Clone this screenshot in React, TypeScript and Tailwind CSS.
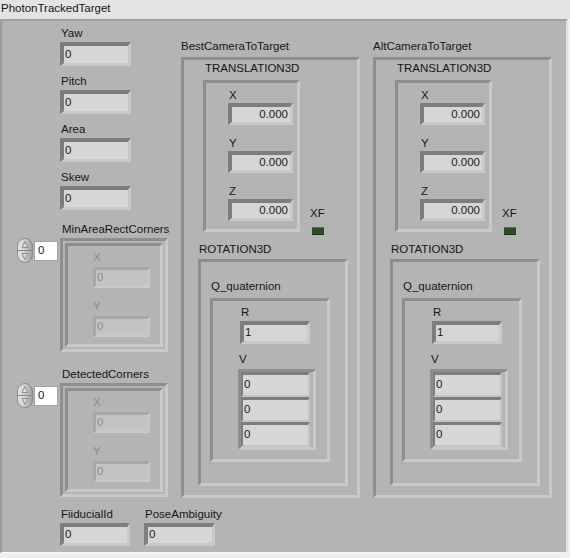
const FRAME =
  "border-[3px] border-t-[#8e8e8e] border-l-[#8e8e8e] border-b-[#c9c9c9] border-r-[#c9c9c9]";

function Lbl({ t, cls = "", dim = false }: { t: string; cls?: string; dim?: boolean }) {
  return (
    <div
      className={`h-[15px] leading-[15px] whitespace-nowrap ${dim ? "text-[#8d8d8d]" : "text-[#161616]"} ${cls}`}
    >
      {t}
    </div>
  );
}

function Num({ v, cls, right = false }: { v: string; cls: string; right?: boolean }) {
  return (
    <div
      className={`flex items-center border-t-4 border-l-4 border-b-[3px] border-r-[3px] border-t-[#7d7d7d] border-l-[#7d7d7d] border-b-[#c9c9c9] border-r-[#c9c9c9] bg-[#d6d6d6] text-[#1a1a1a] leading-none ${
        right ? "justify-end pr-[2px]" : "pl-[1px]"
      } ${cls}`}
    >
      {v}
    </div>
  );
}

function DimNum({ cls }: { cls: string }) {
  return (
    <div
      className={`flex items-center pl-[1px] border-t-[3px] border-l-[3px] border-b-2 border-r-2 border-t-[#a7a7a7] border-l-[#a7a7a7] border-b-[#c9c9c9] border-r-[#c9c9c9] bg-[#c3c3c3] text-[#8d8d8d] leading-none ${cls}`}
    >
      0
    </div>
  );
}

function Spinner({ id }: { id: string }) {
  return (
    <svg width="16" height="25" viewBox="0 0 16 25">
      <defs>
        <linearGradient id={id} x1="0" y1="0" x2="1" y2="0">
          <stop offset="0" stopColor="#e6e6e6" />
          <stop offset="0.5" stopColor="#cfcfcf" />
          <stop offset="1" stopColor="#9c9c9c" />
        </linearGradient>
      </defs>
      <rect x="0.5" y="0.5" width="15" height="24" rx="7.5" fill={`url(#${id})`} stroke="#8c8c8c" />
      <line x1="1" y1="12.5" x2="15" y2="12.5" stroke="#8c8c8c" />
      <path d="M8 3.5 L11 9.5 L5 9.5 Z" fill="#d8d8d8" stroke="#808080" strokeWidth="0.8" />
      <path d="M8 21.5 L11 15.5 L5 15.5 Z" fill="#d8d8d8" stroke="#808080" strokeWidth="0.8" />
    </svg>
  );
}

function ArrayCtl({ name, id }: { name: string; id: string }) {
  return (
    <>
      <Lbl t={name} cls="ml-[45px]" />
      <div className="flex items-start mt-[1px]">
        <div className="flex items-center w-[43px] h-[25px]">
          <Spinner id={id} />
          <div className="ml-[1px] w-[24px] h-[20px] border border-[#a2a2a2] bg-white flex items-center pl-[3px] text-[#1a1a1a] leading-none">
            0
          </div>
        </div>
        <div className={`${FRAME} w-[108px] h-[114px]`}>
          <div className={`${FRAME} ml-[2px] mt-[2px] w-[98px] h-[104px] flex flex-col`}>
            <Lbl t="X" dim cls="ml-[25px] mt-[4px]" />
            <DimNum cls="ml-[25px] mt-[2px] w-[57px] h-[21px]" />
            <Lbl t="Y" dim cls="ml-[25px] mt-[11px]" />
            <DimNum cls="ml-[25px] mt-[2px] w-[57px] h-[21px]" />
          </div>
        </div>
      </div>
    </>
  );
}

function Camera({ name, cls }: { name: string; cls: string }) {
  return (
    <div className={`flex flex-col mt-[18px] ${cls}`}>
      <Lbl t={name} />
      <div className={`${FRAME} mt-[3px] w-[179px] h-[441px] flex flex-col`}>
        <Lbl t="TRANSLATION3D" cls="ml-[21px] mt-[1px]" />
        <div className="flex items-start mt-[4px]">
          <div className={`${FRAME} ml-[19px] w-[97px] h-[152px] flex flex-col pl-[22px] pt-[5px]`}>
            {["X", "Y", "Z"].map((a, i) => (
              <div key={a} className={i > 0 ? "mt-[11px]" : ""}>
                <Lbl t={a} cls="ml-[1px]" />
                <Num v="0.000" right cls="w-[65px] h-[22px]" />
              </div>
            ))}
          </div>
          <div className="ml-[10px] mt-[126px] flex flex-col">
            <Lbl t="XF" />
            <div className="ml-[2px] mt-[6px] w-[12px] h-[8px] bg-[#2e4b24] border-t border-t-[#51703f] border-b border-b-[#1f3318]" />
          </div>
        </div>
        <Lbl t="ROTATION3D" cls="ml-[15px] mt-[7px]" />
        <div className={`${FRAME} ml-[14px] mt-[2px] w-[150px] h-[227px] flex flex-col`}>
          <Lbl t="Q_quaternion" cls="ml-[10px] mt-[17px]" />
          <div className={`${FRAME} ml-[9px] mt-[4px] w-[120px] h-[164px] flex flex-col`}>
            <Lbl t="R" cls="ml-[28px] mt-[4px]" />
            <Num v="1" cls="ml-[27px] mt-[1px] w-[70px] h-[23px]" />
            <Lbl t="V" cls="ml-[26px] mt-[8px]" />
            <div className={`${FRAME} ml-[25px] mt-[2px] w-[78px] h-[81px] flex flex-col`}>
              {[0, 1, 2].map((k) => (
                <div
                  key={k}
                  className="flex items-center pl-[1px] w-[69px] h-[25px] border-t-[3px] border-l-2 border-b-2 border-r-2 border-t-[#7d7d7d] border-l-[#7d7d7d] border-b-[#c4c4c4] border-r-[#c4c4c4] bg-[#d6d6d6] text-[#1a1a1a] leading-none"
                >
                  0
                </div>
              ))}
            </div>
          </div>
        </div>
      </div>
    </div>
  );
}

export default function App() {
  return (
    <div className="w-[570px] h-[558px] bg-[#efefef] font-['Liberation_Sans',Arial,sans-serif] text-[11.5px] overflow-hidden">
      <div className="h-[19px] bg-[#e4e4e4] pl-[1px] pt-[1px]">
        <Lbl t="PhotonTrackedTarget" />
      </div>
      <div className="w-[568px] h-[534px] bg-[#b4b4b4] border-t-2 border-l-2 border-r-2 border-b border-t-[#a0a0a0] border-l-[#9c9c9c] border-r-[#e2e2e2] border-b-[#f6f6f6] flex flex-col">
        <div className="flex items-start">
          <div className="ml-[15px] w-[151px] flex flex-col">
            {["Yaw", "Pitch", "Area", "Skew"].map((n, i) => (
              <div key={n} className={i === 0 ? "mt-[5px]" : "mt-[8px]"}>
                <Lbl t={n} cls="ml-[44px]" />
                <Num v="0" cls="ml-[43px] mt-[1px] w-[71px] h-[24px]" />
              </div>
            ))}
            <div className="mt-[12px]" />
            <ArrayCtl name="MinAreaRectCorners" id="sp1" />
            <div className="mt-[15px]" />
            <ArrayCtl name="DetectedCorners" id="sp2" />
          </div>
          <Camera name="BestCameraToTarget" cls="ml-[13px]" />
          <Camera name="AltCameraToTarget" cls="ml-[13px]" />
        </div>
        <div className="flex items-start mt-[9px]">
          <div className="ml-[58px]">
            <Lbl t="FiiducialId" cls="ml-[1px]" />
            <Num v="0" cls="mt-[1px] w-[70px] h-[23px]" />
          </div>
          <div className="ml-[14px]">
            <Lbl t="PoseAmbiguity" cls="ml-[1px]" />
            <Num v="0" cls="mt-[1px] w-[71px] h-[23px]" />
          </div>
        </div>
      </div>
    </div>
  );
}
